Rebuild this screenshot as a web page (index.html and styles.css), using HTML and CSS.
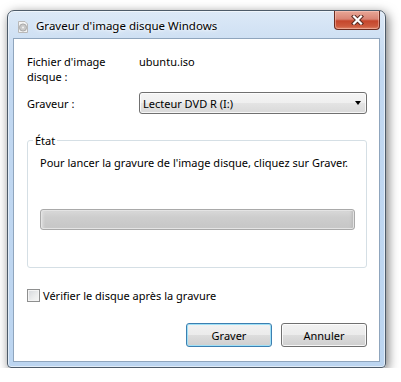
FILE: index.html
```html
<!DOCTYPE html>
<html lang="fr">
<head>
<meta charset="utf-8">
<title>Graveur d'image disque Windows</title>
<link rel="stylesheet" href="styles.css">
</head>
<body>
<div class="stage">
  <div class="window">
    <div class="titlebar">
      <svg class="app-icon" width="12" height="12" viewBox="0 0 12 12">
        <path d="M1.5 0.5 H8 L10.5 3 V11.5 H1.5 Z" fill="#f4f4f4" stroke="#b8b8b8"/>
        <circle cx="6" cy="6.5" r="3.6" fill="#c9c9c9" stroke="#9c9c9c" stroke-width="0.8"/>
        <circle cx="6" cy="6.5" r="1" fill="#f4f4f4"/>
      </svg>
      <span class="title">Graveur d'image disque Windows</span>
      <div class="close">
        <svg width="13" height="10" viewBox="0 0 13 10">
          <path d="M3 1.5 L10 8.5 M10 1.5 L3 8.5" stroke="#5a2b22" stroke-width="4.2" stroke-linecap="square"/>
          <path d="M3 1.5 L10 8.5 M10 1.5 L3 8.5" stroke="#ffffff" stroke-width="2.2" stroke-linecap="square"/>
        </svg>
      </div>
    </div>
    <div class="client">
      <div class="fields">
        <div class="label">Fichier d'image<br>disque :</div>
        <div class="value">ubuntu.iso</div>
        <div class="label mid">Graveur :</div>
        <div class="select">
          <span>Lecteur DVD R (I:)</span>
          <span class="arrow"></span>
        </div>
      </div>
      <fieldset class="group">
        <legend>État</legend>
        <p class="status">Pour lancer la gravure de l'image disque, cliquez sur Graver.</p>
        <div class="progress"></div>
      </fieldset>
      <label class="check"><span class="box"></span>Vérifier le disque après la gravure</label>
      <div class="buttons">
        <button class="btn default">Graver</button>
        <button class="btn">Annuler</button>
      </div>
    </div>
  </div>
</div>
</body>
</html>
```

FILE: styles.css
```css
html, body {
  margin: 0;
  background: #ffffff;
}
body {
  font-family: "Noto Sans", "Open Sans", sans-serif;
  font-size: 11px;
  color: #000;
}
.stage {
  padding: 10px 0 0 7px;
}
.window {
  box-sizing: border-box;
  width: 379px;
  height: 358px;
  border: 1px solid #4d5b69;
  border-radius: 7px 7px 4px 4px;
  background: linear-gradient(to bottom, #dce9f7 0px, #cfe0f3 27px, #c2d8f1 60px, #bcd5f0 100%);
  box-shadow: 2px 3px 11px rgba(0, 0, 0, 0.55), inset 0 0 0 1px rgba(255, 255, 255, 0.55);
  display: flex;
  flex-direction: column;
  padding: 0 5px 5px 5px;
}
.titlebar {
  height: 27px;
  display: flex;
  align-items: flex-start;
  flex: none;
}
.app-icon {
  margin: 10px 0 0 4px;
  flex: none;
}
.title {
  margin: 7px 0 0 7px;
  line-height: 15px;
  font-size: 11.5px;
  color: #000;
  text-shadow: 0 0 6px #fff, 0 0 3px #fff;
}
.close {
  margin-left: auto;
  width: 46px;
  height: 19px;
  box-sizing: border-box;
  border: 1px solid #6b2c20;
  border-top: none;
  border-radius: 0 0 4px 4px;
  background: linear-gradient(to bottom, #e8a797 0%, #d98474 45%, #c5462c 55%, #cd5a3e 85%, #e0866a 100%);
  box-shadow: inset 0 0 0 1px rgba(255, 210, 200, 0.45);
  display: flex;
  align-items: center;
  justify-content: center;
}
.client {
  flex: 1;
  box-sizing: border-box;
  background: #fff;
  border: 1px solid #8fa5bd;
  padding: 15px 12px 0 13px;
  display: flex;
  flex-direction: column;
}
.fields {
  display: grid;
  grid-template-columns: 112px 1fr;
  row-gap: 8px;
  line-height: 15px;
}
.label.mid {
  align-self: center;
}
.select {
  box-sizing: border-box;
  height: 22px;
  border: 1px solid #707070;
  border-radius: 3px;
  background: linear-gradient(to bottom, #f4f4f4 0%, #efefef 50%, #e4e4e4 51%, #d9d9d9 100%);
  box-shadow: inset 0 0 0 1px rgba(255, 255, 255, 0.75);
  display: flex;
  align-items: center;
  padding: 0 5px 0 3px;
}
.arrow {
  margin-left: auto;
  width: 0;
  height: 0;
  border-left: 3.5px solid transparent;
  border-right: 3.5px solid transparent;
  border-top: 4px solid #000;
}
.group {
  margin: 19px 0 0 0;
  padding: 7px 11px 37px 12px;
  border: 1px solid #d5dfe5;
  border-radius: 3px;
  min-width: 0;
}
.group legend {
  margin-left: -7px;
  padding: 0 2px;
  line-height: 15px;
}
.status {
  margin: 0;
  line-height: 15px;
}
.progress {
  margin-top: 39px;
  height: 21px;
  box-sizing: border-box;
  border: 1px solid #a9a9a9;
  border-radius: 3px;
  background: linear-gradient(to bottom, #d9d9d9 0%, #cdcdcd 40%, #c6c6c6 100%);
  box-shadow: inset 0 0 0 1px #e4e4e4, inset 3px 0 3px -1px #e0e0e0, inset -3px 0 3px -1px #b5b5b5;
}
.check {
  margin-top: 20px;
  display: flex;
  align-items: center;
  gap: 3px;
  line-height: 15px;
}
.box {
  width: 13px;
  height: 13px;
  box-sizing: border-box;
  border: 1px solid #8e8f8f;
  background: linear-gradient(135deg, #d4d7db 0%, #eceded 60%, #f6f6f6 100%);
  box-shadow: inset 0 0 0 1px #f4f4f4;
  flex: none;
}
.buttons {
  margin-top: 20px;
  display: flex;
  justify-content: flex-end;
  gap: 9px;
}
.btn {
  width: 86px;
  height: 24px;
  box-sizing: border-box;
  border: 1px solid #707070;
  border-radius: 3px;
  background: linear-gradient(to bottom, #f2f2f2 0%, #ebebeb 50%, #dddddd 51%, #cfcfcf 100%);
  box-shadow: inset 0 0 0 1px rgba(255, 255, 255, 0.8);
  font-family: inherit;
  font-size: 11px;
  color: #000;
  padding: 0;
}
.btn.default {
  border-color: #3c7fb1;
  box-shadow: inset 0 0 0 1px #9fe0f6;
}
```
